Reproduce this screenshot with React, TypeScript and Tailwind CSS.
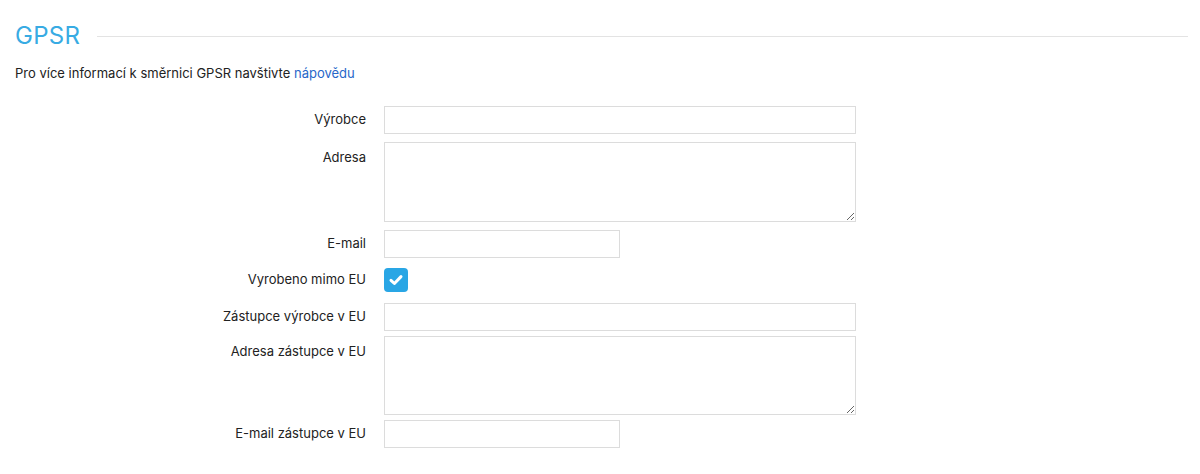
import type { ReactNode } from 'react';

const Row = ({ label, children, className = '', top = false }: { label: string; children: ReactNode; className?: string; top?: boolean }) => (
  <div className={`flex ${top ? 'items-start' : 'items-center'} ${className}`}>
    <label className={`w-[351px] shrink-0 text-right text-[13px] text-[#222] ${top ? 'pt-[6px]' : ''}`}>{label}</label>
    <div className="ml-[18px]">{children}</div>
  </div>
);

const inputCls = 'block h-[28px] border border-[#dcdcdc] bg-white px-2 text-[13px] outline-none';
const areaCls = 'block border border-[#dcdcdc] bg-white px-2 py-1 text-[13px] outline-none';

export default function App() {
  return (
    <div className="min-h-[474px] bg-white pl-[15px] pr-[12px] pt-[20px] font-['Inter','Liberation_Sans',sans-serif] text-[#222]">
      <div className="flex items-center">
        <h2 className="text-[24px] leading-[32px] font-normal tracking-[0.3px] text-[#38abe3]">GPSR</h2>
        <div className="ml-[17px] flex-1 border-t border-[#e3e3e3]" />
      </div>
      <p className="mt-[12px] text-[13px] leading-[18px]">
        Pro více informací k směrnici GPSR navštivte{' '}
        <a href="#" className="text-[#2767c9]">nápovědu</a>
      </p>

      <div className="mt-[24px]">
        <Row label="Výrobce">
          <input type="text" className={`${inputCls} w-[472px]`} />
        </Row>
        <Row label="Adresa" top className="mt-[8px]">
          <textarea className={`${areaCls} h-[80px] w-[472px]`} />
        </Row>
        <Row label="E-mail" className="mt-[8px]">
          <input type="text" className={`${inputCls} w-[236px]`} />
        </Row>
        <Row label="Vyrobeno mimo EU" className="mt-[10px]">
          <div className="flex h-[24px] w-[24px] items-center justify-center rounded-[4px] bg-[#29a6e5]">
            <svg width="16" height="16" viewBox="0 0 16 16" fill="none">
              <path d="M3 8.3 6.4 11.5 13 4.6" stroke="white" strokeWidth="3" strokeLinecap="round" strokeLinejoin="round" />
            </svg>
          </div>
        </Row>
        <Row label="Zástupce výrobce v EU" className="mt-[11px]">
          <input type="text" className={`${inputCls} w-[472px]`} />
        </Row>
        <Row label="Adresa zástupce v EU" top className="mt-[5px]">
          <textarea className={`${areaCls} h-[79px] w-[472px]`} />
        </Row>
        <Row label="E-mail zástupce v EU" className="mt-[5px]">
          <input type="text" className={`${inputCls} w-[236px]`} />
        </Row>
      </div>
    </div>
  );
}
